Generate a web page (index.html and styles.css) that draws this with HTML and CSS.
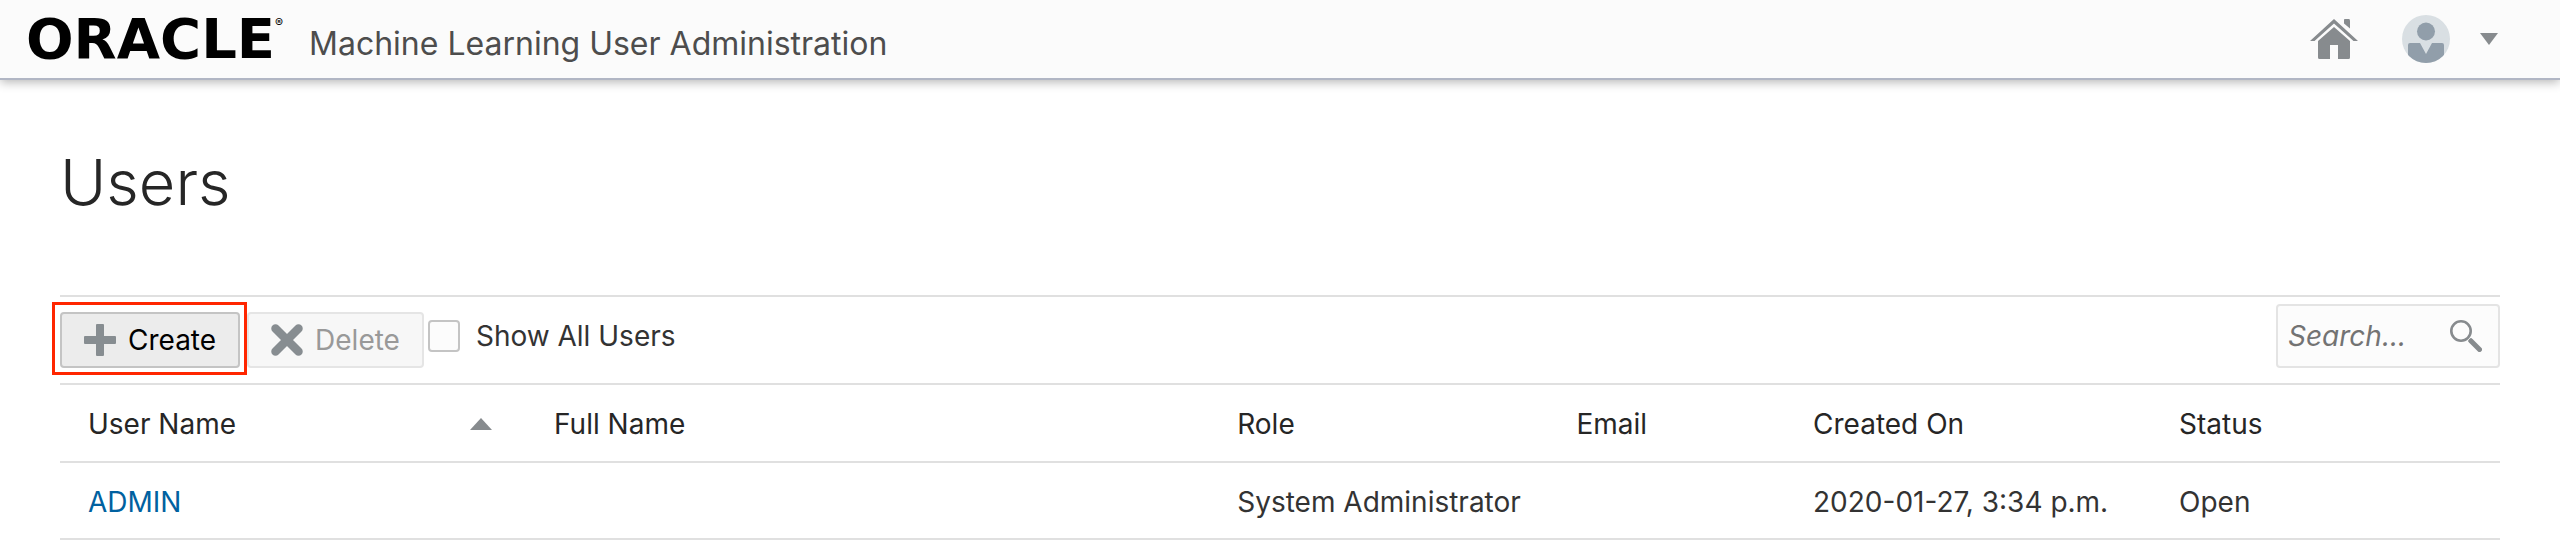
FILE: index.html
```
<!DOCTYPE html>
<html lang="en">
<head>
<meta charset="utf-8">
<title>Users - Machine Learning User Administration</title>
<link rel="stylesheet" href="styles.css">
</head>
<body>
<header class="topbar">
  <div class="brand">
    <div class="logo"><span class="logo-word">ORACLE</span><span class="logo-mark">®</span></div>
    <span class="app-name">Machine Learning User Administration</span>
  </div>
  <nav class="actions">
    <a class="home" href="#" aria-label="Home">
      <svg width="48" height="40" viewBox="0 0 48 40" fill="#878b8e"><path d="M34 0.500Q34 0 35 0H39Q40 0 40 2V9.500L34 4.500Z"/><path d="M24 0 48 22H43.500L24 4.500 4.500 22H0Z"/><path d="M24 8 40 22V38.500Q40 40 38.500 40H28V26H20V40H9.500Q8 40 8 38.500V22Z"/></svg>
    </a>
    <button class="account" type="button" aria-label="Account menu">
      <svg width="48" height="48" viewBox="0 0 48 48"><defs><clipPath id="disc"><circle cx="24" cy="24" r="24"/></clipPath></defs><g clip-path="url(#disc)"><path fill="#d9dfe3" d="M0 0H48V48H0Z"/><circle cx="24" cy="16.500" r="9" fill="#919eaa"/><path fill="#919eaa" d="M6 30Q6 28 8 28H18L24 39 30 28H40Q42 28 42 30V48H6Z"/></g></svg>
      <svg width="18" height="12" viewBox="0 0 18 12"><path fill="#878b8e" d="M0 0H18L9 12Z"/></svg>
    </button>
  </nav>
</header>
<main class="page">
  <h1 class="title">Users</h1>
  <div class="toolbar">
    <div class="highlight">
      <button class="btn" type="button">
        <svg width="32" height="32" viewBox="0 0 32 32" fill="#878d91"><path d="M13 0H19Q20 0 20 1V12H31Q32 12 32 13V19Q32 20 31 20H20V31Q20 32 19 32H13Q12 32 12 31V20H1Q0 20 0 19V13Q0 12 1 12H12V1Q12 0 13 0Z"/></svg>
        Create
      </button>
    </div>
    <button class="btn" type="button" disabled>
      <svg width="32" height="32" viewBox="0 0 32 32"><path d="M4.500 4.500 27.500 27.500M27.500 4.500 4.500 27.500" fill="none" stroke="#878d91" stroke-width="8.500" stroke-linecap="round"/></svg>
      Delete
    </button>
    <label class="show-all"><input class="check" type="checkbox">Show All Users</label>
    <div class="search">
      <input class="search-input" type="text" placeholder="Search..." aria-label="Search users">
      <button class="search-btn" type="button" aria-label="Search">
        <svg width="32" height="32" viewBox="0 0 32 32" fill="none" stroke="#878b8e"><circle cx="11" cy="11" r="9.700" stroke-width="2.600"/><path d="M19.500 19.500 21 21" stroke-width="4"/><path d="M21 21 29.500 29.500" stroke-width="5" stroke-linecap="round"/></svg>
      </button>
    </div>
  </div>
  <table class="users">
    <colgroup><col class="c-user"><col class="c-full"><col class="c-role"><col class="c-email"><col class="c-created"><col></colgroup>
    <thead>
      <tr>
        <th scope="col" aria-sort="ascending"><div class="sortable">User Name<svg width="22" height="12" viewBox="0 0 22 12"><path fill="#878b8e" d="M0 12 11 0 22 12Z"/></svg></div></th>
        <th scope="col">Full Name</th><th scope="col">Role</th><th scope="col">Email</th><th scope="col">Created On</th><th scope="col">Status</th>
      </tr>
    </thead>
    <tbody>
      <tr><td><a class="user-link" href="#">ADMIN</a></td><td></td><td>System Administrator</td><td></td><td>2020-01-27, 3:34 p.m.</td><td>Open</td></tr>
    </tbody>
  </table>
</main>
</body>
</html>
```
FILE: styles.css
```
* { box-sizing: border-box; }
body {
  margin: 0;
  background: #fff;
  color: #333;
  font: 28px/36px Inter, "Liberation Sans", sans-serif;
}
button, input { font: inherit; color: inherit; margin: 0; }
svg { display: block; flex: none; }

.topbar {
  display: flex;
  justify-content: space-between;
  height: 80px;
  padding: 0 62px 0 26px;
  background: #fbfbfb;
  border-bottom: 2px solid #b1b6c4;
  box-shadow: 0 2px 10px rgba(0, 0, 0, 0.3);
}
.brand { display: flex; align-items: center; }
.logo { display: flex; align-items: flex-start; width: 283px; color: #000; }
.logo-word { font: bold 56px/56px "DejaVu Sans", sans-serif; }
.logo-mark { font-size: 12px; line-height: 24px; }
.app-name { color: #4d4d4d; font-size: 32px; line-height: 40px; padding-top: 10px; }
.actions { display: flex; align-items: center; gap: 44px; }
.account {
  display: flex;
  align-items: center;
  gap: 30px;
  padding: 0;
  border: 0;
  background: none;
}

.page { padding: 62px 60px 0; }
.title {
  margin: 0 0 73px;
  color: #262626;
  font-size: 63px;
  font-weight: 300;
  line-height: 80px;
}

.toolbar {
  display: flex;
  align-items: flex-end;
  padding: 7px 0 15px;
  border-top: 2px solid #e0e0e0;
  border-bottom: 2px solid #e0e0e0;
}
.highlight { position: relative; margin-right: 7px; }
.highlight::after {
  content: "";
  position: absolute;
  inset: -10px -7px -7px -8px;
  border: 3px solid #ff2600;
  pointer-events: none;
}
.btn {
  display: flex;
  align-items: center;
  gap: 12px;
  height: 56px;
  padding: 0 22px;
  border: 2px solid #c4c4c4;
  border-radius: 4px;
  background: #ececec;
  color: #000;
}
.btn:disabled { border-color: #e5e5e5; background: #f7f7f7; color: #999; }
.show-all { display: flex; align-items: center; gap: 16px; height: 64px; margin-left: 4px; }
.check {
  appearance: none;
  width: 32px;
  height: 32px;
  border: 2px solid #c4c4c4;
  border-radius: 4px;
  background: #fcfcfc;
}
.search {
  display: flex;
  align-items: center;
  width: 224px;
  height: 64px;
  margin-left: auto;
  padding: 0 16px 0 10px;
  border: 2px solid #e4e4e4;
  border-radius: 4px;
  background: #fcfcfc;
}
.search-input { flex: 1; min-width: 0; padding: 0; border: 0; background: none; }
.search-input::placeholder { color: #737373; font-style: italic; opacity: 1; }
.search-btn { padding: 0; border: 0; background: none; }

.users { width: 100%; table-layout: fixed; border-collapse: collapse; }
.users th, .users td {
  height: 77px;
  padding: 2px 0 0 28px;
  border-bottom: 2px solid #e0e0e0;
  text-align: left;
  font-weight: 400;
  white-space: nowrap;
}
.users th { color: #262626; }
.c-user { width: 19.100%; }
.c-full { width: 28%; }
.c-role { width: 13.900%; }
.c-email { width: 9.700%; }
.c-created { width: 15%; }
.sortable { display: flex; align-items: center; justify-content: space-between; padding-right: 34px; }
.user-link { color: #0061a0; text-decoration: none; }
```
